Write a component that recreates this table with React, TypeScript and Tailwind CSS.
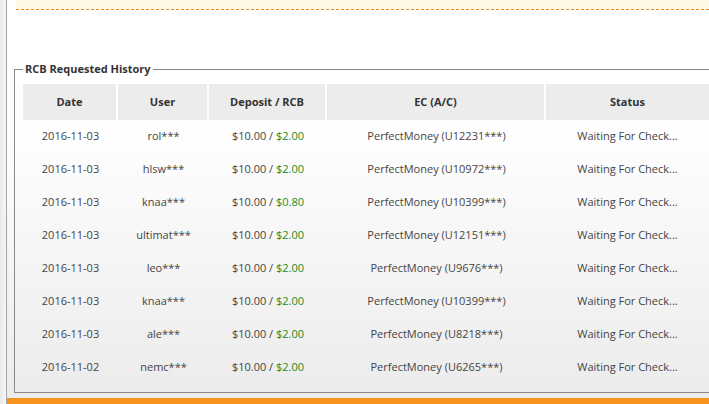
const rows = [
  { date: "2016-11-03", user: "rol***", rcb: "$2.00", ec: "PerfectMoney (U12231***)" },
  { date: "2016-11-03", user: "hlsw***", rcb: "$2.00", ec: "PerfectMoney (U10972***)" },
  { date: "2016-11-03", user: "knaa***", rcb: "$0.80", ec: "PerfectMoney (U10399***)" },
  { date: "2016-11-03", user: "ultimat***", rcb: "$2.00", ec: "PerfectMoney (U12151***)" },
  { date: "2016-11-03", user: "leo***", rcb: "$2.00", ec: "PerfectMoney (U9676***)" },
  { date: "2016-11-03", user: "knaa***", rcb: "$2.00", ec: "PerfectMoney (U10399***)" },
  { date: "2016-11-03", user: "ale***", rcb: "$2.00", ec: "PerfectMoney (U8218***)" },
  { date: "2016-11-02", user: "nemc***", rcb: "$2.00", ec: "PerfectMoney (U6265***)" },
];

const App = () => {
  return (
    <div className="flex h-[404px] w-[709px] overflow-hidden font-['Open_Sans',sans-serif] text-[11px] text-[#444]">
      <div className="w-[7px] shrink-0 border-r border-[#a3a3a3] bg-linear-to-r from-[#e9e9e9] to-[#f6f6f6]" />

      <div className="flex min-w-0 flex-1 flex-col bg-linear-to-b from-white from-30% to-[#ebebeb]">
        <div className="ml-[9px] h-[10px] shrink-0 border-b border-dashed border-[#f0892a] bg-[#fff8e6]" />

        <fieldset className="mt-[52px] ml-[7px] w-[704px] shrink-0 border border-[#8a8a8a] px-[8px] pb-[8px]">
          <legend className="px-[2px] text-[11px] leading-[14px] font-bold text-[#333]">
            RCB Requested History
          </legend>

          <table className="mt-[8px] w-[686px] table-fixed border-separate border-spacing-0">
            <colgroup>
              <col className="w-[95px]" />
              <col className="w-[91px]" />
              <col className="w-[118px]" />
              <col className="w-[219px]" />
              <col className="w-[163px]" />
            </colgroup>
            <thead>
              <tr className="h-[36px] font-bold text-[#333]">
                <th className="border-r-2 border-white bg-[#ececec] text-center">Date</th>
                <th className="border-r-2 border-white bg-[#ececec] text-center">User</th>
                <th className="border-r-2 border-white bg-[#ececec] text-center">Deposit / RCB</th>
                <th className="border-r-2 border-white bg-[#ececec] text-center">EC (A/C)</th>
                <th className="bg-[#ececec] text-center">Status</th>
              </tr>
            </thead>
            <tbody>
              {rows.map((r, i) => (
                <tr key={i} className="h-[33px] text-center">
                  <td>{r.date}</td>
                  <td>{r.user}</td>
                  <td>
                    $10.00 / <span className="text-[#238a23]">{r.rcb}</span>
                  </td>
                  <td>{r.ec}</td>
                  <td>Waiting For Check...</td>
                </tr>
              ))}
            </tbody>
          </table>
        </fieldset>

        <div className="mt-auto h-[6px] shrink-0 bg-[#f7941d]" />
      </div>
    </div>
  );
};

export default App;
